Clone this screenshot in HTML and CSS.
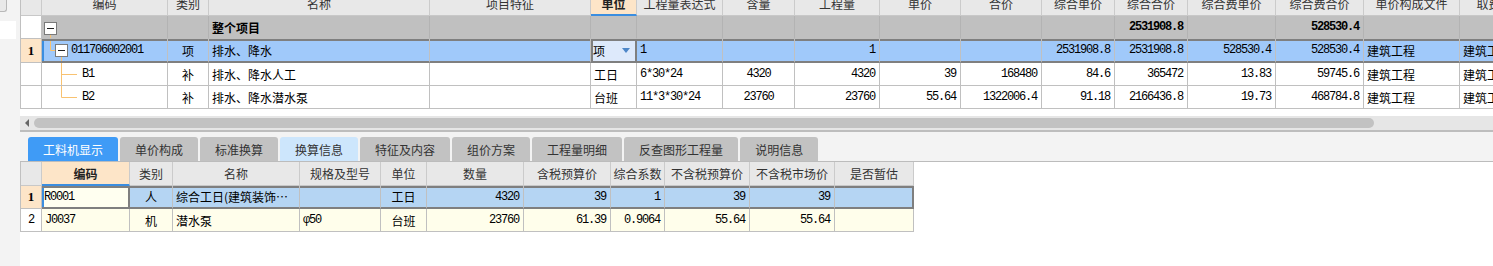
FILE: index.html
```html
<!DOCTYPE html>
<html lang="zh">
  <head>
    <meta charset="UTF-8" />
    <meta name="viewport" content="width=device-width, initial-scale=1.0" />
    <title>分部分项</title>
    <link rel="stylesheet" href="styles.css">
  </head>
  <body>
    <div class="app">
      <div class="side">
        <div class="side-btn"></div>
        <div class="side-box"></div>
      </div>
      <div class="main">
        <div class="pane-top">
          <div class="grid top">
            <div class="row head">
              <div class="c"></div>
              <div class="c">编码</div>
              <div class="c">类别</div>
              <div class="c">名称</div>
              <div class="c">项目特征</div>
              <div class="c cur">单位</div>
              <div class="c">工程量表达式</div>
              <div class="c">含量</div>
              <div class="c">工程量</div>
              <div class="c">单价</div>
              <div class="c">合价</div>
              <div class="c">综合单价</div>
              <div class="c">综合合价</div>
              <div class="c">综合费单价</div>
              <div class="c">综合费合价</div>
              <div class="c">单价构成文件</div>
              <div class="c">取费专业</div>
            </div>
            <div class="row total">
              <div class="c rn"></div>
              <div class="c code">
                <svg class="tree" width="20" height="22">
                  <path d="M8.5 18.5V22" stroke="#f8c271" />
                  <rect x="2.5" y="6.5" width="12" height="12" fill="#fff" stroke="#7a7a7a" />
                  <path d="M5 12.5h7" stroke="#222" />
                </svg>
              </div>
              <div class="c"></div>
              <div class="c b">整个项目</div>
              <div class="c"></div>
              <div class="c"></div>
              <div class="c"></div>
              <div class="c"></div>
              <div class="c"></div>
              <div class="c"></div>
              <div class="c"></div>
              <div class="c"></div>
              <div class="c r n b">2531908.8</div>
              <div class="c"></div>
              <div class="c r n b">528530.4</div>
              <div class="c"></div>
              <div class="c"></div>
            </div>
            <div class="row sel">
              <div class="c rn">1</div>
              <div class="c code">
                <svg class="tree" width="27" height="22">
                  <path d="M8.5 2V11.5H13.5M19.5 17.5V22" stroke="#f8c271" fill="none" />
                  <rect x="13.5" y="5.5" width="12" height="12" fill="#fff" stroke="#7a7a7a" />
                  <path d="M16 11.5h7" stroke="#222" />
                </svg>
                <span class="n">011706002001</span>
              </div>
              <div class="c m">项</div>
              <div class="c">排水、降水</div>
              <div class="c"></div>
              <div class="c ed">项<span class="drop"></span></div>
              <div class="c n">1</div>
              <div class="c"></div>
              <div class="c r n">1</div>
              <div class="c"></div>
              <div class="c"></div>
              <div class="c r n">2531908.8</div>
              <div class="c r n">2531908.8</div>
              <div class="c r n">528530.4</div>
              <div class="c r n">528530.4</div>
              <div class="c">建筑工程</div>
              <div class="c">建筑工程</div>
            </div>
            <div class="row">
              <div class="c rn"></div>
              <div class="c code">
                <svg class="tree" width="38" height="22">
                  <path d="M19.5 0V22M19.5 11.5H35" stroke="#f8c271" fill="none" />
                </svg>
                <span class="n">B1</span>
              </div>
              <div class="c m">补</div>
              <div class="c">排水、降水人工</div>
              <div class="c"></div>
              <div class="c">工日</div>
              <div class="c n">6*30*24</div>
              <div class="c m n">4320</div>
              <div class="c r n">4320</div>
              <div class="c r n">39</div>
              <div class="c r n">168480</div>
              <div class="c r n">84.6</div>
              <div class="c r n">365472</div>
              <div class="c r n">13.83</div>
              <div class="c r n">59745.6</div>
              <div class="c">建筑工程</div>
              <div class="c">建筑工程</div>
            </div>
            <div class="row">
              <div class="c rn"></div>
              <div class="c code">
                <svg class="tree" width="38" height="22">
                  <path d="M19.5 0V11.5H35" stroke="#f8c271" fill="none" />
                </svg>
                <span class="n">B2</span>
              </div>
              <div class="c m">补</div>
              <div class="c">排水、降水潜水泵</div>
              <div class="c"></div>
              <div class="c">台班</div>
              <div class="c n">11*3*30*24</div>
              <div class="c m n">23760</div>
              <div class="c r n">23760</div>
              <div class="c r n">55.64</div>
              <div class="c r n">1322006.4</div>
              <div class="c r n">91.18</div>
              <div class="c r n">2166436.8</div>
              <div class="c r n">19.73</div>
              <div class="c r n">468784.8</div>
              <div class="c">建筑工程</div>
              <div class="c">建筑工程</div>
            </div>
          </div>
        </div>

        <div class="hscroll">
          <span class="arrow"></span>
          <span class="thumb"></span>
        </div>

        <div class="tabs">
          <div class="tab on">工料机显示</div>
          <div class="tab">单价构成</div>
          <div class="tab">标准换算</div>
          <div class="tab hint">换算信息</div>
          <div class="tab">特征及内容</div>
          <div class="tab">组价方案</div>
          <div class="tab">工程量明细</div>
          <div class="tab">反查图形工程量</div>
          <div class="tab">说明信息</div>
        </div>

        <div class="pane-bottom">
          <div class="grid bottom">
            <div class="row head">
              <div class="c"></div>
              <div class="c cur">编码</div>
              <div class="c">类别</div>
              <div class="c">名称</div>
              <div class="c">规格及型号</div>
              <div class="c">单位</div>
              <div class="c">数量</div>
              <div class="c">含税预算价</div>
              <div class="c">综合系数</div>
              <div class="c">不含税预算价</div>
              <div class="c">不含税市场价</div>
              <div class="c">是否暂估</div>
            </div>
            <div class="row sel">
              <div class="c rn">1</div>
              <div class="c ed n">R0001</div>
              <div class="c m">人</div>
              <div class="c name"><span class="clip">综合工日(建筑装饰工程)</span></div>
              <div class="c"></div>
              <div class="c m">工日</div>
              <div class="c r n">4320</div>
              <div class="c r n">39</div>
              <div class="c r n">1</div>
              <div class="c r n">39</div>
              <div class="c r n">39</div>
              <div class="c"></div>
            </div>
            <div class="row cream">
              <div class="c rn n">2</div>
              <div class="c n">J0037</div>
              <div class="c m">机</div>
              <div class="c">潜水泵</div>
              <div class="c n">φ50</div>
              <div class="c m">台班</div>
              <div class="c r n">23760</div>
              <div class="c r n">61.39</div>
              <div class="c r n">0.9064</div>
              <div class="c r n">55.64</div>
              <div class="c r n">55.64</div>
              <div class="c"></div>
            </div>
          </div>
        </div>
      </div>
    </div>
  </body>
</html>
```

FILE: styles.css
```css
* {
  margin: 0;
  padding: 0;
  box-sizing: border-box;
}
body {
  font-family: "Noto Sans CJK SC", sans-serif;
  font-size: 12px;
  color: #000;
  background: #fff;
  overflow: hidden;
}
.app {
  display: flex;
  height: 266px;
}
.side {
  width: 20px;
  flex-shrink: 0;
  background: #f3f3f3;
}
.side-btn {
  width: 7px;
  height: 12px;
  background: #e9e9e9;
  border: 1px solid #b8b8b8;
  border-left: none;
  border-top: none;
  border-radius: 0 0 3px 0;
}
.side-box {
  margin-top: 9px;
  width: 16px;
  height: 18px;
  background: #fff;
}
.main {
  flex: 1;
  min-width: 0;
  display: flex;
  flex-direction: column;
}

/* grids */
.pane-top {
  height: 116px;
  overflow: hidden;
  background: #fff;
}
.grid {
  border-left: 1px solid #c0c0c0;
}
.row {
  display: grid;
}
.top .row {
  grid-template-columns: 21px 126px 41px 221px 161px 46px 86px 72px 85px 81px 81px 73px 73px 88px 88px 96px 82px;
}
.top .head {
  margin-top: -8px;
}
.bottom .row {
  grid-template-columns: 21px 88px 43px 127px 81px 46px 97px 87px 54px 85px 85px 79px;
}
.c {
  height: 23px;
  display: flex;
  align-items: center;
  padding: 0 3px;
  border-right: 1px solid #c0c0c0;
  border-bottom: 1px solid #c0c0c0;
  white-space: nowrap;
  overflow: hidden;
}
.head .c {
  height: 24px;
  justify-content: center;
  background: #e8e8e8;
  color: #333;
  border-right-color: #cbcbcb;
  border-bottom-color: #c8c8c8;
}
.head .cur {
  background: #fde5c8;
  color: #222;
  font-weight: bold;
  border-bottom: 2px solid #3b8ee0;
}
.r {
  justify-content: flex-end;
}
.m {
  justify-content: center;
}
.b {
  font-weight: bold;
}
.n {
  font-family: "Liberation Mono", monospace;
  font-size: 12px;
  letter-spacing: -1.2px;
}
.r.n {
  padding-right: 4px;
}
.rn {
  justify-content: center;
  background: #fff;
}
.code {
  padding: 0;
}
.tree {
  flex-shrink: 0;
  margin-right: 2px;
}
.total .c {
  background: #c0c0c0;
  border-right-color: #b3b3b3;
}
.total .rn {
  background: #fff;
  border-right-color: #c0c0c0;
}

/* selected rows */
.sel .c {
  box-shadow: inset 0 2px #7f7f7f;
  border-bottom: 2px solid #7f7f7f;
}
.top .sel .c {
  height: 24px;
  background: #a0c9fa;
}
.bottom .sel .c {
  background: #b5d5f3;
}
.bottom .sel .c:last-child {
  border-right: 2px solid #7f7f7f;
}
.grid .sel .rn {
  background: #fde5c8;
  box-shadow: none;
  border-bottom: 1px solid #c0c0c0;
  font-family: "Liberation Serif", serif;
  font-weight: bold;
  font-size: 13px;
}
.grid .sel .code {
  box-shadow: inset 0 2px #7f7f7f, inset 2px 0 #3b8ee0;
}
.top .sel .ed {
  background: #dde9fb;
  justify-content: space-between;
  padding: 0 5px 0 2px;
  box-shadow: inset 0 2px #7f7f7f, inset 2px 0 #7f7f7f;
  border-right: 2px solid #7f7f7f;
}
.bottom .sel .ed {
  background: #fffff0;
  padding-left: 2px;
  box-shadow: inset 0 2px #7f7f7f, inset 2px 0 #3b8ee0;
  border-right: 2px solid #7f7f7f;
}
.drop {
  border-left: 4px solid transparent;
  border-right: 4px solid transparent;
  border-top: 5px solid #4d86c8;
}
.name {
  padding-right: 10px;
}
.clip {
  overflow: hidden;
  text-overflow: ellipsis;
}
.cream .c {
  background: #fffeeb;
}
.cream .rn {
  background: #fff;
}

/* scrollbar */
.hscroll {
  height: 16px;
  display: flex;
  align-items: center;
  padding-left: 5px;
  background: #e6e6e6;
  border-bottom: 2px solid #bdbdbd;
}
.arrow {
  border-right: 4px solid #666;
  border-top: 4px solid transparent;
  border-bottom: 4px solid transparent;
}
.thumb {
  width: 1340px;
  height: 10px;
  margin-left: 5px;
  background: #c2c2c2;
  border-radius: 5px;
}

/* tabs */
.tabs {
  height: 29px;
  display: flex;
  gap: 2px;
  padding: 5px 0 0 8px;
  background: #f3f3f3;
}
.tab {
  height: 24px;
  display: flex;
  align-items: center;
  padding: 0 15px;
  background: #c2c2c2;
  color: #333;
  border-radius: 3px 3px 0 0;
}
.tab.on {
  background: #3f9bf6;
  color: #fff;
}
.tab.hint {
  background: #cde6fc;
}
.pane-bottom {
  flex: 1;
  background: #fff;
  border-top: 1px solid #bcbcbc;
}
```
